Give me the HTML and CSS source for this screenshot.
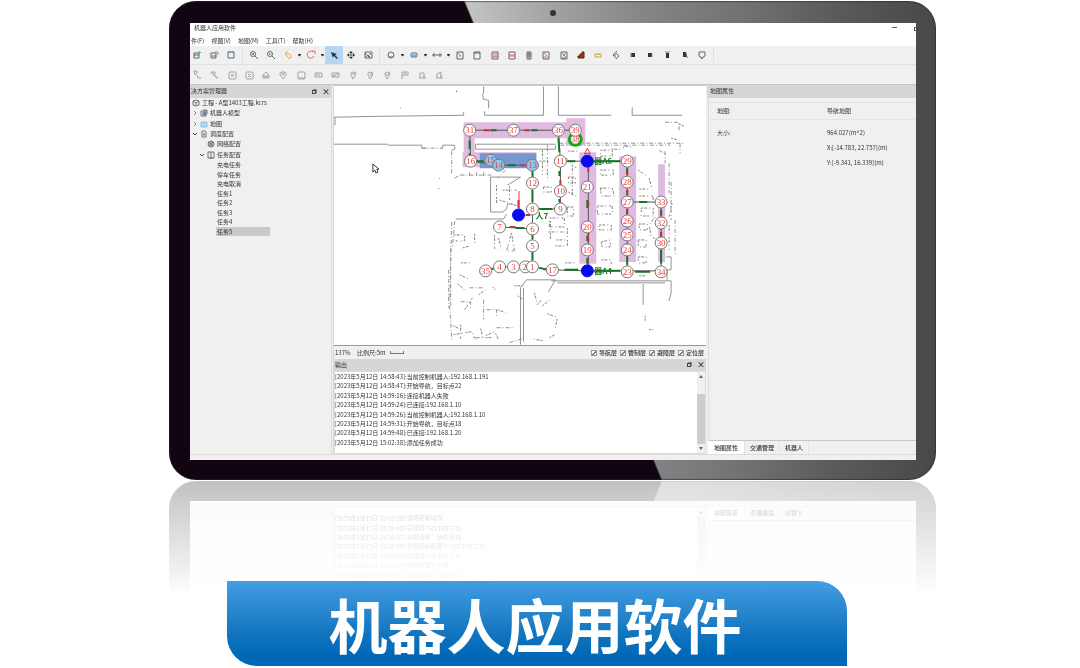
FILE: index.html
```html
<!DOCTYPE html>
<html lang="zh-CN">
<head>
<meta charset="utf-8">
<title>机器人应用软件</title>
<link rel="stylesheet" href="styles.css">
</head>
<body>
<main class="stage">
  <div class="device">
    <span class="camera"></span>
    <div class="screen">
      <header class="titlebar"><span>机器人应用软件</span><span class="window-buttons"><i class="minimize"></i><i class="maximize"></i></span></header>
      <nav class="menubar">
        <button>件(F)</button><button>视图(V)</button><button>地图(M)</button><button>工具(T)</button><button>帮助(H)</button>
      </nav>
      <div class="toolbar">
        <button class="tool" aria-label="新建"><svg viewBox="0 0 14 14"><path d="M4 5h5v5H4zM4 7h5"/><path class="green" d="M9 3v3M8 4.500h3"/></svg></button>
        <button class="tool" aria-label="打开"><svg viewBox="0 0 14 14"><path d="M4 5h5v5H4zM5 8h4"/><path class="green" d="M8 4h3v3"/></svg></button>
        <button class="tool" aria-label="保存"><svg viewBox="0 0 14 14"><path d="M4 4h6v6H4z"/><path class="blue" d="M4 4h6M5 3v2M9 3v2"/></svg></button>
        <i class="sep"></i>
        <button class="tool" aria-label="放大"><svg viewBox="0 0 14 14"><circle cx="6" cy="6" r="2.500"/><path d="M8 8l3 3M5 6h2M6 5v2"/></svg></button>
        <button class="tool" aria-label="缩小"><svg viewBox="0 0 14 14"><circle cx="6" cy="6" r="2.500"/><path d="M8 8l3 3M5 6h2"/></svg></button>
        <button class="tool" aria-label="撤销"><svg viewBox="0 0 14 14"><path class="orange" d="M7 3L4 6l3 3M4 6h4c2 0 2 2 2 4H7"/></svg></button>
        <button class="drop" aria-label="撤销列表"></button>
        <button class="tool" aria-label="重做"><svg viewBox="0 0 14 14"><path class="red" d="M9 4a3.500 3.500 0 1 0 1 4M8 3h3v3"/></svg></button>
        <button class="drop" aria-label="重做列表"></button>
        <button class="tool active" aria-label="选择"><svg viewBox="0 0 14 14"><path class="solid" d="M4 4l6 2-2 1 3 3-1 1-3-3-1 2z"/></svg></button>
        <button class="tool" aria-label="移动"><svg viewBox="0 0 14 14"><path d="M7 4v6M4 7h6"/><path class="solid" d="M7 3l2 2H5zM7 11l2-2H5zM3 7l2-2v4zM11 7L9 5v4z"/></svg></button>
        <button class="tool" aria-label="图片"><svg viewBox="0 0 14 14"><path d="M4 4h7v6H4zM5 9l2-2 2 2M4 5l5 5M8 6h2"/></svg></button>
        <i class="sep"></i>
        <button class="tool" aria-label="节点"><svg viewBox="0 0 14 14"><circle cx="7" cy="7" r="3"/><path d="M5 9h4"/></svg></button>
        <button class="drop" aria-label="节点列表"></button>
        <button class="tool" aria-label="区域"><svg viewBox="0 0 14 14"><rect x="4" y="5" width="6" height="4" rx="1"/><path class="blue" d="M5 7h4M5 8h4"/></svg></button>
        <button class="drop" aria-label="区域列表"></button>
        <button class="tool" aria-label="线段"><svg viewBox="0 0 14 14"><path d="M3 6v2h2V6zM6 7h2M9 6v2h2V6z"/></svg></button>
        <button class="drop" aria-label="线段列表"></button>
        <div class="tool-run">
          <button class="tool" aria-label="编辑"><svg viewBox="0 0 14 14"><path d="M4 4h6v7H4z"/><path class="red" d="M5 5l3 3M6 8h2"/></svg></button>
          <button class="tool" aria-label="矩形"><svg viewBox="0 0 14 14"><path d="M4 4h6v7H4zM4 5h6"/></svg></button>
          <button class="tool" aria-label="障碍"><svg viewBox="0 0 14 14"><path d="M4 4h6v7H4z"/><path class="red" d="M5 6h5M5 8h5M5 9h5"/></svg></button>
          <button class="tool" aria-label="禁区"><svg viewBox="0 0 14 14"><path d="M4 4h6v7H4z"/><path class="red" d="M4 7h6M4 8h6"/></svg></button>
          <button class="tool" aria-label="列"><svg viewBox="0 0 14 14"><path d="M5 4h4v7H5zM5 6h4M5 8h4M7 4v7"/></svg></button>
          <button class="tool" aria-label="擦除"><svg viewBox="0 0 14 14"><path d="M4 4h6v7H4z"/><path class="red" d="M4 4l6 6M4 9h3v2"/></svg></button>
          <button class="tool" aria-label="裁剪"><svg viewBox="0 0 14 14"><path d="M4 4h6v7H4zM5 10h4"/><path class="red" d="M5 5l4 4M9 5L6 8"/></svg></button>
          <button class="tool" aria-label="楼梯"><svg viewBox="0 0 14 14"><path fill="#9a3a16" stroke="#5d240e" d="M4 10V8h2V6h2V4h2v6z"/></svg></button>
          <button class="tool" aria-label="标尺"><svg viewBox="0 0 14 14"><path stroke="#c8a542" d="M4 6h6v3H4zM6 6v1M8 6v1"/></svg></button>
          <button class="tool" aria-label="旋转"><svg viewBox="0 0 14 14"><path d="M8 3L4 7l4 4M4 7h3M7 5l3 3-2 2"/></svg></button>
          <button class="tool" aria-label="左对齐"><svg viewBox="0 0 14 14"><path class="solid" d="M5 5h4v4H5z"/><path class="blue" d="M5 5v4"/></svg></button>
          <button class="tool" aria-label="右对齐"><svg viewBox="0 0 14 14"><path class="solid" d="M5 5h4v4H5z"/><path class="blue" d="M9 6v3"/></svg></button>
          <button class="tool" aria-label="上对齐"><svg viewBox="0 0 14 14"><path class="solid" d="M6 5h3v5H6z"/><path class="blue" d="M5 4h5"/></svg></button>
          <button class="tool" aria-label="下对齐"><svg viewBox="0 0 14 14"><path class="solid" d="M5 4h3l1 5H5z"/><path class="blue" d="M8 9h2"/></svg></button>
          <button class="tool" aria-label="提示"><svg viewBox="0 0 14 14"><path d="M4 4h6v4L8 9 7 11 6 9 4 8z"/></svg></button>
        </div>
        <i class="sep"></i>
      </div>
      <div class="toolbar muted">
        <div class="tool-run">
          <button class="tool" aria-label="路径起点"><svg viewBox="0 0 14 14"><path d="M4 3h3v2L5 7zM7 7l1 3h3"/></svg></button>
          <button class="tool" aria-label="路径终点"><svg viewBox="0 0 14 14"><path d="M4 4h4v2H5zM6 7l3 1v2h2"/></svg></button>
          <button class="tool" aria-label="添加框"><svg viewBox="0 0 14 14"><rect x="4" y="4" width="7" height="7" rx="1"/><path d="M6 7h3M7 6v3"/></svg></button>
          <button class="tool" aria-label="关闭框"><svg viewBox="0 0 14 14"><rect x="4" y="4" width="7" height="7" rx="1"/><path d="M6 6l3 3M9 6L6 9"/></svg></button>
          <button class="tool" aria-label="机器"><svg viewBox="0 0 14 14"><path d="M4 10V7l3-3 3 3v3zM4 8h6M6 8v2M8 8v2"/></svg></button>
          <button class="tool" aria-label="定位"><svg viewBox="0 0 14 14"><path d="M7 11L4 7V5l2-1h2l2 1v2z"/><circle cx="7" cy="6" r="1"/></svg></button>
          <button class="tool" aria-label="面板"><svg viewBox="0 0 14 14"><rect x="4" y="4" width="7" height="7" rx="1"/><path d="M4 10h7"/></svg></button>
          <button class="tool" aria-label="充电"><svg viewBox="0 0 14 14"><path d="M4 5h7v4H4zM6 6v2M8 6v2"/></svg></button>
          <button class="tool" aria-label="消息"><svg viewBox="0 0 14 14"><path d="M4 5h7v4H4zM4 9l7-4M6 6v3"/></svg></button>
          <button class="tool" aria-label="站点一"><svg viewBox="0 0 14 14"><path d="M7 11L5 7V5l2-1 3 1-1 3zM6 6h3"/></svg></button>
          <button class="tool" aria-label="站点二"><svg viewBox="0 0 14 14"><path d="M7 11L5 7V5l2-1 3 1-1 3zM8 5v3"/></svg></button>
          <button class="tool" aria-label="站点三"><svg viewBox="0 0 14 14"><path d="M7 11L5 7V5l2-1 3 1-1 3zM6 7l3-1"/></svg></button>
          <button class="tool" aria-label="旗帜"><svg viewBox="0 0 14 14"><path d="M5 11V4h6v3H5M8 4v3"/></svg></button>
          <button class="tool" aria-label="上传"><svg viewBox="0 0 14 14"><path d="M4 10h7M5 10V5h4v5M8 8h2"/></svg></button>
          <button class="tool" aria-label="下载"><svg viewBox="0 0 14 14"><path d="M4 10h7M5 10V6l4-2v6M8 8h2"/></svg></button>
        </div>
      </div>

      <div class="workspace">
        <aside class="explorer">
          <div class="panel-head"><span>决方案管理器</span><span class="head-tools"><button class="float" aria-label="浮动"></button><button class="close" aria-label="关闭">×</button></span></div>
          <ul class="tree">
            <li><svg class="ico" viewBox="0 0 8 8"><path d="M1 2l3-1 3 1v4L4 7 1 6zM1 2l3 2 3-2M4 4v3"/></svg>工程 - A型1403工程.kcrs</li>
            <li><svg class="twist" viewBox="0 0 6 6"><path d="M2 1l2 2-2 2"/></svg><svg class="ico" viewBox="0 0 8 8"><path d="M1 2h5v5H1zM3 1h4v4"/><path fill="#4da0d8" d="M3 3h3v3H3z"/></svg>机器人模型</li>
            <li><svg class="twist" viewBox="0 0 6 6"><path d="M2 1l2 2-2 2"/></svg><svg class="ico" viewBox="0 0 8 8"><path fill="#a8d8f2" stroke="#8ec6e4" d="M1 2h6v5H1z"/></svg>地图</li>
            <li><svg class="twist open" viewBox="0 0 6 6"><path d="M1 2l2 2 2-2"/></svg><svg class="ico" viewBox="0 0 8 8"><path d="M2 1h3l1 1v5H2zM3 4h2M3 5h2"/></svg>调度配置</li>
            <li class="level2"><svg class="ico" viewBox="0 0 8 8"><circle cx="4" cy="4" r="3"/><path d="M1 4h6M4 1v6M2 2l4 4M6 2L2 6"/></svg>网络配置</li>
            <li class="level1"><svg class="twist open" viewBox="0 0 6 6"><path d="M1 2l2 2 2-2"/></svg><svg class="ico" viewBox="0 0 8 8"><path d="M1 1h6v6H1zM4 1v6M2 7h4"/></svg>任务配置</li>
          </ul>
          <ul class="leaves">
            <li>充电任务</li><li>停车任务</li><li>充电取消</li><li>任务1</li><li>任务2</li><li>任务3</li><li>任务4</li><li class="selected">任务5</li>
          </ul>
        </aside>

        <section class="center">
          <svg class="map" viewBox="334 86 373 259" role="img" aria-label="导航地图">
            <g class="zones">
              <path d="M464 122h103v16H475v14h62v2h-57v13h-17v-15h1zM567 118h19v27h-19zM580 152h17v112h-17zM620 156h17v106h-17zM659 164h7v98h-7z"/>
              <path class="zone-blue" d="M480 153h57v15h-57z"/>
            </g>
            <g class="walls">
              <path d="M334 117l45-1 85-1v-3M335 117v8M334 144h54M388 145h34v3h5M441 148h2v-3h12v4l-3 1M484 86v7l-1 2 1 4 5 1v8M485 111v4h59V86M559 86v29h53M633 107v8h50M476 144h80M476 149h80v-4M476 144v5M491 177v35h12l4-3 1-5h5M491 177h30l-13 8M456 219h48l3-5M521 345v-57l6-8h29l-7 12M552 281h120v12l-2 8M558 283h108M644 284v21M524 288v54M672 257v13h-4v10M667 257h5"/>
              <path class="dash" d="M422 148h20M452 151v23M455 178l7-4M461 175h31M470 172v5M477 172v5M484 172v5M560 143h124M561 145h110M455 221l-2 25M451 248v58M449 270v38M450 306l2 34M666 122h14v10M681 143v10M666 151v12M670 163v30M660 150l6 4M672 182v38M676 220v34M452 222l-2 80M510 343l13-4M461 302h10v8M487 310h10v6M497 328h16M470 288h15M484 300v20M506 170l-8 8"/>
              <path class="specks" d="M497 185v20M503 190h14M500 200l18 6M510 186v14M543 150v25M548 145v35M540 161h12M544 187h8v5h-8zM550 218h15v9h-15zM549 232h16M557 240h12M556 246h12M551 221v18M568 228v20M573 165v30M567 158l10 10M601 150h12v6h-12zM598 206h15v8h-15zM600 225h12v5h-12zM602 242l9-2v7h-8zM639 170l9 6M640 189h12M642 208h12v8h-12zM640 224h8v6h-8zM639 240h8v7h-8zM639 257h8v6h-8zM640 276h7M612 149h10l4-3 8 1M569 151h9M569 177h7v6h-7zM568 207h6v9h-6z"/>
              <path class="specks" d="M454 235h11v6h-10M463 248l7-2M495 235v15M499 238l3 12M512 233l-5 18h8zM461 263h12M460 275l9 4M475 234v10M465 310l8-12M461 325v14M453 326l11 5M454 335l18-3 5 8M474 338h20M481 329l3 11M486 336l9-4 4 8M535 293l3 12 4-5M543 306l8-6M515 286h12M548 314l10 4-2 10M543 341l-12-2M646 316v5M650 330h4M518 296l6 4M550 338l7-4M458 284l7 6M479 295l7-5M493 287l3 3M498 310l8 3"/>
              <path class="specks" d="M601 170h13v5h-13zM601 188h12l2 8h-13zM640 196h14v7M650 178l3 12M673 203l-3 14M670 225v25M656 217l-6 8 2 12 5 2M569 192l9 5M602 260h10v5M566 263h10M680 124l5 2M672 138l8 2M457 90v2M400 108h1M440 178v1M439 188v1"/>
            </g>
            <g class="edges">
              <path d="M470 130h106M470 130l1 31 29 4h33v102M559 130l2 31v48h-28M561 161h67M500 227l33 2M589 161v110M628 161v111M628 202h34v70M533 267l20 3 35 1h74M486 271l14-4h33"/>
              <path class="arrows" d="M470 140v9M470 153v5M491 130h6M538 130h-6M539 165h-7M516 165h-8M477 161h7M533 171v6M533 190v12M540 209h13M533 234v5M533 252v8M559 138l1 14M560 171v5M560 199v3M568 161h8M594 161h27M588 200v8M588 236v5M588 258v6M628 168v6M628 190v5M628 209v5M628 256v9M640 202h8M662 210v6M662 232v5M662 250v14M540 268l8 2M565 270h14M595 271h26M636 272h15M494 269h-6M516 228h9"/>
              <path class="red-marks" d="M484 130h6M525 130h5M561 180v5M561 202v3M521 165h4M510 227h6M589 168v4M589 202v4M589 232v4M589 238v4M628 172v3M628 190v3M628 210v3M662 213v3M662 232v3M519 200v8M597 271h4M526 215h5"/>
              <path class="heading" d="M519.500 191v18M588 153l-3 1 3-6 3 6z"/>
            </g>
            <g class="nodes">
              <circle cx="470" cy="130" r="6"/><circle cx="514" cy="130" r="6"/><circle cx="559" cy="130" r="6"/><circle class="green-node" cx="576" cy="139" r="6"/><circle cx="576" cy="130" r="6"/>
              <circle cx="471" cy="161" r="6"/><circle class="light" cx="491" cy="160" r="6"/><circle class="light" cx="499" cy="165" r="6"/><circle class="light" cx="533" cy="165" r="6"/><circle cx="533" cy="183" r="6"/>
              <circle cx="561" cy="161" r="6"/><circle cx="561" cy="191" r="6"/><circle cx="561" cy="209" r="6"/><circle cx="533" cy="209" r="6"/><circle cx="500" cy="227" r="6"/><circle cx="533" cy="229" r="6"/><circle cx="533" cy="246" r="6"/>
              <circle cx="486" cy="271" r="6"/><circle cx="500" cy="267" r="6"/><circle cx="514" cy="267" r="6"/><circle cx="526" cy="267" r="6"/><circle cx="533" cy="267" r="6"/><circle cx="553" cy="270" r="6"/>
              <circle cx="588" cy="187" r="6"/><circle cx="588" cy="227" r="6"/><circle cx="588" cy="250" r="6"/>
              <circle cx="628" cy="161" r="6"/><circle cx="628" cy="182" r="6"/><circle cx="628" cy="202" r="6"/><circle cx="628" cy="221" r="6"/><circle cx="628" cy="235" r="6"/><circle cx="628" cy="250" r="6"/><circle cx="628" cy="272" r="6"/>
              <circle cx="662" cy="202" r="6"/><circle cx="662" cy="223" r="6"/><circle cx="662" cy="243" r="6"/><circle cx="662" cy="272" r="6"/>
              <circle class="robot" cx="519" cy="215" r="6"/><circle class="robot" cx="588" cy="161" r="6"/><circle class="robot" cx="588" cy="271" r="6"/>
            </g>
            <g class="numbers">
              <text x="470" y="133">31</text><text x="514" y="133">37</text><text x="559" y="133">36</text><text x="576" y="133">39</text><text x="576" y="142">38</text>
              <text x="471" y="164">16</text><text x="491" y="163">15</text><text x="499" y="168">14</text><text x="533" y="168">13</text><text x="533" y="186">12</text>
              <text x="561" y="164">11</text><text x="561" y="194">10</text><text x="561" y="212">9</text><text x="533" y="212">8</text><text x="500" y="230">7</text><text x="533" y="232">6</text><text x="533" y="249">5</text>
              <text x="486" y="274">35</text><text x="500" y="270">4</text><text x="514" y="270">3</text><text x="525" y="270">2</text><text x="533" y="270">1</text><text x="553" y="273">17</text>
              <text x="588" y="190">21</text><text x="588" y="230">20</text><text x="588" y="253">19</text>
              <text x="628" y="164">29</text><text x="628" y="185">28</text><text x="628" y="205">27</text><text x="628" y="224">26</text><text x="628" y="238">25</text><text x="628" y="253">24</text><text x="628" y="275">23</text>
              <text x="662" y="205">33</text><text x="662" y="226">32</text><text x="662" y="246">30</text><text x="662" y="275">34</text>
            </g>
            <g class="robot-names"><text x="536" y="219">人7</text><text x="595" y="164">器A6</text><text x="595" y="274">器A4</text></g>
            <path class="pointer" d="M373 164v8l2-2 1 3 2-1-1-3h2z"/>
          </svg>
          <div class="map-status">
            <span class="zoom">137%</span><span>比例尺:5m</span><i class="scale"></i>
            <div class="layers">
              <label><input type="checkbox" checked>导航层</label><label><input type="checkbox" checked>管制层</label><label><input type="checkbox" checked>避障层</label><label><input type="checkbox" checked>定位层</label>
            </div>
          </div>
          <div class="panel-head output-head"><span>输出</span><span class="head-tools"><button class="float" aria-label="浮动"></button><button class="close" aria-label="关闭">×</button></span></div>
          <div class="log">
            <div class="log-lines">
              <p>[2023年5月12日 14:58:43]:当前控制机器人:192.168.1.191</p>
              <p>[2023年5月12日 14:58:47]:开始导航，目标点22</p>
              <p>[2023年5月12日 14:59:16]:连接机器人失败</p>
              <p>[2023年5月12日 14:59:24]:已连接:192.168.1.10</p>
              <p>[2023年5月12日 14:59:26]:当前控制机器人:192.168.1.10</p>
              <p>[2023年5月12日 14:59:31]:开始导航，目标点18</p>
              <p>[2023年5月12日 14:59:48]:已连接:192.168.1.20</p>
              <p>[2023年5月12日 15:02:38]:添加任务成功</p>
            </div>
            <div class="scrollbar"><i class="up"></i><i class="thumb"></i><i class="down"></i></div>
          </div>
        </section>

        <aside class="props">
          <div class="panel-head"><span>地图属性</span></div>
          <div class="prop-body">
            <dl class="prop-row first"><dt>地图:</dt><dd>导航地图</dd></dl>
            <dl class="prop-row"><dt>大小:</dt><dd>964.027(m^2)</dd><dd>X:[-14.783, 22.757](m)</dd><dd>Y:[-9.341, 16.339](m)</dd></dl>
          </div>
          <div class="tabs"><button class="current">地图属性</button><button>交通管理</button><button>机器人</button></div>
        </aside>
      </div>
    </div>
  </div>
  <h1 class="banner">机器人应用软件</h1>
</main>
</body>
</html>
```
FILE: styles.css
```css
* { box-sizing: border-box; }
body {
  margin: 0;
  background: #fff;
  color: #333;
  font: 6px/10px "Noto Sans CJK SC", "Noto Sans", sans-serif;
  overflow: hidden;
}
ul, dl, dd, p, h1 { margin: 0; padding: 0; }
ul { list-style: none; }
button { border: 0; padding: 0; margin: 0; background: none; color: inherit; font: inherit; }

.stage { display: flex; flex-direction: column; padding-top: 1px; }
.device {
  position: relative;
  margin: 0 144px 0 169px;
  padding: 22px 20px 20px 21px;
  border-radius: 27px;
  background:
    linear-gradient(67.6deg, #110511 51%, transparent 51.2%),
    linear-gradient(90deg, #c4c4c4 39%, #a2a2a2 50%, #858587 62%, #737375 74%, #5c5c5e 86%, #48484a 100%);
  box-shadow: inset 0 0 1px 1px rgba(40, 40, 42, .6);
  -webkit-box-reflect: below 1px linear-gradient(transparent 76%, rgba(0, 0, 0, .25));
}
.camera {
  position: absolute;
  top: 9px;
  left: 50%;
  width: 6px;
  height: 6px;
  margin-left: -3px;
  border-radius: 50%;
  background: #333;
}
.screen { display: flex; flex-direction: column; min-height: 437px; background: #f0f0f0; overflow: hidden; }

.titlebar { display: flex; justify-content: space-between; height: 12px; padding-left: 4px; background: #fff; }
.window-buttons { display: flex; gap: 17px; padding-top: 4px; }
.minimize { width: 5px; height: 1px; background: #555; }
.maximize { width: 2px; height: 4px; border: 1px solid #555; border-right: 0; }
.menubar { display: flex; gap: 7px; height: 11px; padding-left: 1px; background: #fff; line-height: 11px; }

.toolbar { display: flex; align-items: center; gap: 3px; height: 19px; border-bottom: 1px solid #e0e0e0; }
.toolbar.muted { height: 20px; border-bottom-color: #c6c6c6; }
.muted .tool { opacity: .55; }
.tool-run { display: flex; justify-content: space-between; flex: 0 0 256px; }
.tool { flex: 0 0 14px; height: 14px; }
.tool svg { display: block; width: 14px; height: 14px; fill: none; stroke: #666; stroke-width: 1; }
.tool.active { background: #b5d7f3; box-shadow: 0 0 0 2px #b5d7f3; }
.tool .red { stroke: #e06a62; }
.tool .blue { stroke: #4f9bd0; }
.tool .green { stroke: #59b382; }
.tool .orange { stroke: #eda553; }
.tool .solid { fill: #333; stroke: none; }
.drop { width: 3px; height: 3px; background: #333; clip-path: polygon(0 0, 100% 0, 100% 50%, 50% 100%, 0 50%); }
.sep { width: 1px; height: 16px; margin: 0 1px; background: #e0e0e0; }

.workspace { display: grid; grid-template-columns: 142px minmax(0, 1fr) 209px; column-gap: 1px; flex: 1; margin-bottom: 5px; border-bottom: 1px solid #dcdcdc; }
.panel-head { display: flex; justify-content: space-between; height: 13px; padding: 0 4px 0 1px; background: #d6d6d6; line-height: 12px; }
.head-tools { display: flex; align-items: center; gap: 6px; }
.float { width: 4px; height: 4px; border: 1px solid #444; box-shadow: 1px -1px 0 #888; }
.close { width: 5px; font-size: 8px; font-weight: 700; line-height: 12px; }

.explorer { border-right: 1px solid #dadada; }
.tree { display: grid; grid-auto-rows: 1fr; min-height: 62px; }
.tree li { display: flex; align-items: center; gap: 2px; padding-left: 2px; white-space: nowrap; }
.twist { width: 6px; height: 6px; fill: none; stroke: #888; stroke-width: 1; }
.twist.open { stroke: #444; }
.tree .level1 { padding-left: 9px; }
.tree .level2 { padding-left: 17px; }
.ico { width: 8px; height: 8px; fill: none; stroke: #777; stroke-width: 1; }
.leaves { display: grid; grid-auto-rows: 1fr; min-height: 76px; padding-left: 26px; }
.leaves li { width: 54px; padding-left: 1px; line-height: 9px; }
.leaves .selected { background: #c9c9c9; }

.center { display: flex; flex-direction: column; border-left: 1px solid #d6d6d6; }
.map { display: block; width: 100%; height: 261px; background: #fff; border-top: 1px solid #ccc; border-bottom: 1px solid #999; }
.zones { fill: #dfbbe1; }
.zone-blue { fill: #7797d1; }
.walls { fill: none; stroke: #777; stroke-width: 1; opacity: .8; }
.dash { stroke-dasharray: 4 2 1 2; }
.specks { stroke: #666; stroke-dasharray: 2 1 3 2 1 3; }
.edges { fill: none; stroke: #555; stroke-width: 1; }
.arrows { stroke: #167424; stroke-width: 2; }
.red-marks { stroke: #c33; stroke-width: 2; }
.heading { stroke: #e33; }
.nodes { fill: #fff; stroke: #777; stroke-width: 1; }
.light { fill: #8bc8ef; }
.green-node { fill: #fff; stroke: #14a91d; stroke-width: 3; }
.robot { fill: #0a0af0; stroke: #0a0af0; }
.numbers { fill: #f03a32; font: 400 9px "Liberation Serif", serif; text-anchor: middle; }
.robot-names { fill: #157a22; font: 700 8px "Noto Sans CJK SC", sans-serif; }
.pointer { fill: #fff; stroke: #333; stroke-width: 1; }

.map-status { display: flex; align-items: center; height: 13px; padding: 0 2px 0 1px; }
.zoom { width: 22px; }
.scale { width: 14px; height: 3px; margin-left: 4px; border: 1px solid #777; border-top: 0; }
.layers { display: flex; gap: 3px; margin-left: auto; }
.layers label { display: flex; align-items: center; gap: 2px; font-weight: 500; }
.layers input {
  appearance: none;
  width: 6px;
  height: 6px;
  margin: 0;
  border: 1px solid #999;
  background: linear-gradient(135deg, transparent 45%, #777 45%, #777 65%, transparent 65%) #fff;
}
.output-head { height: 12px; }
.log { display: flex; flex: 1; background: #fff; border: 1px solid #ddd; }
.log-lines { display: grid; grid-auto-rows: 1fr; flex: 1; height: 75px; line-height: 9px; white-space: nowrap; }
.scrollbar { display: flex; flex-direction: column; align-items: center; width: 8px; padding: 3px 0; background: #f0f0f0; }
.up, .down { width: 4px; height: 3px; background: #666; clip-path: polygon(50% 0, 100% 100%, 0 100%); }
.down { transform: rotate(180deg); }
.thumb { width: 100%; flex: 1; margin: 16px 0 3px; background: #cdcdcd; }

.props { display: flex; flex-direction: column; }
.props .panel-head { padding-left: 3px; }
.prop-body { flex: 1; margin: 0 0 0 1px; padding-top: 4px; border-left: 1px solid #ddd; border-bottom: 1px solid #c6c6c6; }
.prop-row { display: grid; grid-template-columns: 110px 1fr; padding: 8px 0 0 8px; row-gap: 5px; }
.prop-row dd { grid-column: 2; }
.first { height: 18px; padding-top: 3px; border-top: 1px solid #e4e4e4; border-bottom: 1px solid #e4e4e4; }
.tabs { display: flex; height: 13px; padding-left: 1px; line-height: 12px; }
.tabs button { padding: 0 5px; border-right: 1px solid #e2e2e2; font-weight: 500; }
.tabs .current { padding: 0 6px; background: #fff; }

.banner {
  margin: 101px 233px 0 227px;
  padding-right: 4px;
  border-radius: 0 30px 0 30px;
  background: linear-gradient(to bottom, #3c9ae1 5%, #2a87cd 35%, #0f73bd 65%, #0068b7 88%);
  color: #fff;
  font-size: 59px;
  font-weight: 700;
  line-height: 85px;
  text-align: center;
}
```
